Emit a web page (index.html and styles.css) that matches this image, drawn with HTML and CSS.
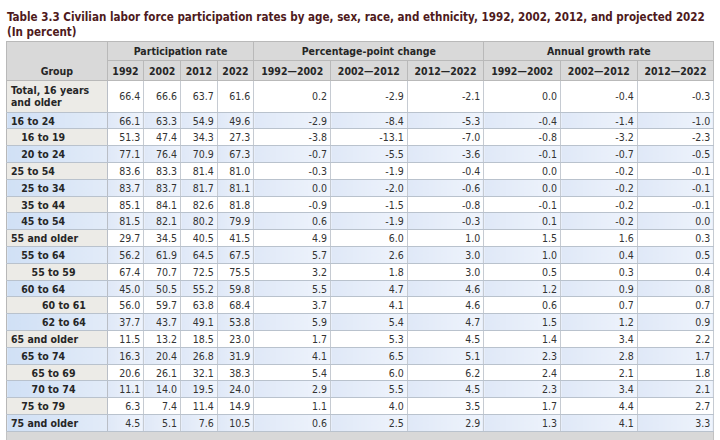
FILE: index.html
```html
<!DOCTYPE html>
<html lang="en">
<head>
<meta charset="utf-8">
<title>Table 3.3</title>
<link rel="stylesheet" href="styles.css">
</head>
<body>
<div class="page">
  <h1 class="title">Table 3.3 Civilian labor force participation rates by age, sex, race, and ethnicity, 1992, 2002, 2012, and projected 2022<br>(In percent)</h1>
  <table class="data">
    <colgroup>
      <col class="c-group">
      <col class="c-year"><col class="c-year"><col class="c-year"><col class="c-year">
      <col class="c-wide"><col class="c-wide"><col class="c-wide">
      <col class="c-wide"><col class="c-wide"><col class="c-wide">
    </colgroup>
    <thead>
      <tr class="h1">
        <th rowspan="2" class="grp-h">Group</th>
        <th colspan="4">Participation rate</th>
        <th colspan="3">Percentage-point change</th>
        <th colspan="3">Annual growth rate</th>
      </tr>
      <tr class="h2">
        <th>1992</th><th>2002</th><th>2012</th><th>2022</th>
        <th>1992—2002</th><th>2002—2012</th><th>2012—2022</th>
        <th>1992—2002</th><th>2002—2012</th><th>2012—2022</th>
      </tr>
    </thead>
    <tbody>
      <tr class="odd total"><th class="l0">Total, 16 years<br>and older</th><td>66.4</td><td>66.6</td><td>63.7</td><td>61.6</td><td>0.2</td><td>-2.9</td><td>-2.1</td><td>0.0</td><td>-0.4</td><td>-0.3</td></tr>
      <tr class="even"><th class="l0">16 to 24</th><td>66.1</td><td>63.3</td><td>54.9</td><td>49.6</td><td>-2.9</td><td>-8.4</td><td>-5.3</td><td>-0.4</td><td>-1.4</td><td>-1.0</td></tr>
      <tr class="odd"><th class="l1">16 to 19</th><td>51.3</td><td>47.4</td><td>34.3</td><td>27.3</td><td>-3.8</td><td>-13.1</td><td>-7.0</td><td>-0.8</td><td>-3.2</td><td>-2.3</td></tr>
      <tr class="even"><th class="l1">20 to 24</th><td>77.1</td><td>76.4</td><td>70.9</td><td>67.3</td><td>-0.7</td><td>-5.5</td><td>-3.6</td><td>-0.1</td><td>-0.7</td><td>-0.5</td></tr>
      <tr class="odd"><th class="l0">25 to 54</th><td>83.6</td><td>83.3</td><td>81.4</td><td>81.0</td><td>-0.3</td><td>-1.9</td><td>-0.4</td><td>0.0</td><td>-0.2</td><td>-0.1</td></tr>
      <tr class="even"><th class="l1">25 to 34</th><td>83.7</td><td>83.7</td><td>81.7</td><td>81.1</td><td>0.0</td><td>-2.0</td><td>-0.6</td><td>0.0</td><td>-0.2</td><td>-0.1</td></tr>
      <tr class="odd"><th class="l1">35 to 44</th><td>85.1</td><td>84.1</td><td>82.6</td><td>81.8</td><td>-0.9</td><td>-1.5</td><td>-0.8</td><td>-0.1</td><td>-0.2</td><td>-0.1</td></tr>
      <tr class="even"><th class="l1">45 to 54</th><td>81.5</td><td>82.1</td><td>80.2</td><td>79.9</td><td>0.6</td><td>-1.9</td><td>-0.3</td><td>0.1</td><td>-0.2</td><td>0.0</td></tr>
      <tr class="odd"><th class="l0">55 and older</th><td>29.7</td><td>34.5</td><td>40.5</td><td>41.5</td><td>4.9</td><td>6.0</td><td>1.0</td><td>1.5</td><td>1.6</td><td>0.3</td></tr>
      <tr class="even"><th class="l1">55 to 64</th><td>56.2</td><td>61.9</td><td>64.5</td><td>67.5</td><td>5.7</td><td>2.6</td><td>3.0</td><td>1.0</td><td>0.4</td><td>0.5</td></tr>
      <tr class="odd"><th class="l2">55 to 59</th><td>67.4</td><td>70.7</td><td>72.5</td><td>75.5</td><td>3.2</td><td>1.8</td><td>3.0</td><td>0.5</td><td>0.3</td><td>0.4</td></tr>
      <tr class="even"><th class="l1">60 to 64</th><td>45.0</td><td>50.5</td><td>55.2</td><td>59.8</td><td>5.5</td><td>4.7</td><td>4.6</td><td>1.2</td><td>0.9</td><td>0.8</td></tr>
      <tr class="odd"><th class="l3">60 to 61</th><td>56.0</td><td>59.7</td><td>63.8</td><td>68.4</td><td>3.7</td><td>4.1</td><td>4.6</td><td>0.6</td><td>0.7</td><td>0.7</td></tr>
      <tr class="even"><th class="l3">62 to 64</th><td>37.7</td><td>43.7</td><td>49.1</td><td>53.8</td><td>5.9</td><td>5.4</td><td>4.7</td><td>1.5</td><td>1.2</td><td>0.9</td></tr>
      <tr class="odd"><th class="l0">65 and older</th><td>11.5</td><td>13.2</td><td>18.5</td><td>23.0</td><td>1.7</td><td>5.3</td><td>4.5</td><td>1.4</td><td>3.4</td><td>2.2</td></tr>
      <tr class="even"><th class="l1">65 to 74</th><td>16.3</td><td>20.4</td><td>26.8</td><td>31.9</td><td>4.1</td><td>6.5</td><td>5.1</td><td>2.3</td><td>2.8</td><td>1.7</td></tr>
      <tr class="odd"><th class="l2">65 to 69</th><td>20.6</td><td>26.1</td><td>32.1</td><td>38.3</td><td>5.4</td><td>6.0</td><td>6.2</td><td>2.4</td><td>2.1</td><td>1.8</td></tr>
      <tr class="even"><th class="l2">70 to 74</th><td>11.1</td><td>14.0</td><td>19.5</td><td>24.0</td><td>2.9</td><td>5.5</td><td>4.5</td><td>2.3</td><td>3.4</td><td>2.1</td></tr>
      <tr class="odd"><th class="l1">75 to 79</th><td>6.3</td><td>7.4</td><td>11.4</td><td>14.9</td><td>1.1</td><td>4.0</td><td>3.5</td><td>1.7</td><td>4.4</td><td>2.7</td></tr>
      <tr class="even"><th class="l0">75 and older</th><td>4.5</td><td>5.1</td><td>7.6</td><td>10.5</td><td>0.6</td><td>2.5</td><td>2.9</td><td>1.3</td><td>4.1</td><td>3.3</td></tr>
    </tbody>
    <tfoot>
      <tr><td colspan="11"></td></tr>
    </tfoot>
  </table>
</div>
</body>
</html>
```
FILE: styles.css
```css
* { box-sizing: border-box; }

html, body {
  margin: 0;
  padding: 0;
  background: #ffffff;
}

body {
  font-family: "DejaVu Sans Condensed", "DejaVu Sans", sans-serif;
  font-stretch: condensed;
  color: #333333;
}

.page {
  padding: 10px 6px 0 6px;
}

.title {
  margin: 0 0 2px 1px;
  font-size: 11.55px;
  line-height: 14.5px;
  font-weight: bold;
  color: #4e1a1c;
}

.data {
  border-collapse: collapse;
  table-layout: fixed;
  width: 707.5px;
  font-size: 10.5px;
  line-height: 12px;
  border: 1px solid #b8b8b8;
}

.c-group { width: 100.7px; }
.c-year { width: 36.67px; }
.c-wide { width: 76.67px; }

thead th {
  background: #d9d9d9;
  color: #262626;
  font-weight: bold;
  border: 1px solid #b9b9b9;
  text-align: center;
  padding: 0 2px;
  white-space: nowrap;
}

thead .h1 { height: 19px; }
thead .h2 { height: 20px; }
thead .h2 th { vertical-align: middle; }

.grp-h {
  vertical-align: bottom;
  padding-bottom: 3px;
}

tbody tr { height: 16.8px; }
tbody tr.total { height: 31.7px; }

tbody th {
  text-align: left;
  font-weight: bold;
  color: #262626;
  white-space: nowrap;
  border-top: 1px solid #b9c2cd;
  border-bottom: 1px solid #b9c2cd;
  border-right: 1px solid #b9bec6;
  padding-top: 0;
  padding-bottom: 0;
  padding-right: 2px;
  vertical-align: middle;
}

tbody td {
  text-align: right;
  padding: 0 3px 0 2px;
  vertical-align: middle;
  border-top: 1px solid #b9c2cd;
  border-bottom: 1px solid #b9c2cd;
  border-left: 1px solid #c6cbd2;
  border-right: 1px solid #c6cbd2;
  white-space: nowrap;
}

.l0 { padding-left: 4px; }
.l1 { padding-left: 14.3px; }
.l2 { padding-left: 24.6px; }
.l3 { padding-left: 35px; }

tr.odd th { background: #ecebe7; }
tr.odd td { background: #ffffff; }

tr.even th { background: linear-gradient(to right, #d0e0f5, #e2ebf8); }
tr.even td { background: linear-gradient(to right, #dfe8f7, #eff4fc); }

tfoot td {
  height: 14px;
  background: #d8d8d8;
  border: 1px solid #c2c2c2;
  padding: 0;
}
```
